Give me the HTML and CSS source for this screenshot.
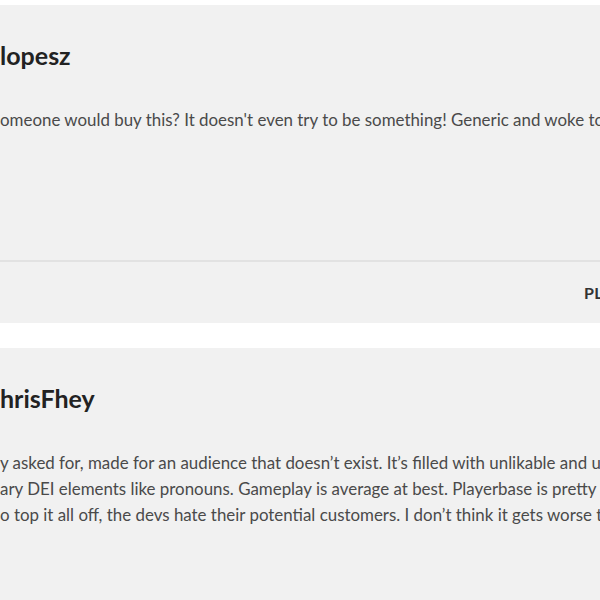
FILE: index.html
```
<!DOCTYPE html>
<html lang="en">
<head>
<meta charset="utf-8">
<title>Reviews</title>
<link rel="stylesheet" href="styles.css">
</head>
<body>
<div class="list">
  <article class="card">
    <div class="card-main">
      <h2 class="author">lopesz</h2>
      <p class="review">omeone would buy this? It doesn't even try to be something! Generic and woke to the core.</p>
    </div>
    <div class="card-footer">
      <span class="spacer"></span>
      <span class="platform">PLAYED ON PC</span>
    </div>
  </article>
  <article class="card">
    <div class="card-main">
      <h2 class="author">hrisFhey</h2>
      <p class="review">y asked for, made for an audience that doesn’t exist. It’s filled with unlikable and uninteresting characters<br>ary DEI elements like pronouns. Gameplay is average at best. Playerbase is pretty much non-existent<br>o top it all off, the devs hate their potential customers. I don’t think it gets worse than this.</p>
    </div>
  </article>
</div>
</body>
</html>
```
FILE: styles.css
```
html, body {
  margin: 0;
  padding: 0;
  background: #ffffff;
  overflow: hidden;
  width: 600px;
  height: 600px;
}

body {
  font-family: "Lato", "Liberation Sans", sans-serif;
}

.list {
  display: flex;
  flex-direction: column;
  gap: 25px;
  padding-top: 5px;
}

.card {
  background: #f1f1f1;
  width: 760px;
}

.card-main {
  height: 255px;
  padding-top: 35px;
  box-sizing: border-box;
}

.author {
  margin: 0;
  font-size: 25px;
  line-height: 30px;
  font-weight: 700;
  color: #222222;
}

.review {
  margin: 37px 0 0;
  font-size: 16.9px;
  line-height: 25.8px;
  color: #4a4a4a;
  white-space: nowrap;
}

.card-footer {
  border-top: 2px solid #e2e2e2;
  height: 61px;
  display: grid;
  grid-template-columns: 584px auto;
  align-items: center;
}

.platform {
  font-size: 16px;
  font-weight: 700;
  color: #333333;
  letter-spacing: 0.3px;
  white-space: nowrap;
}
```
